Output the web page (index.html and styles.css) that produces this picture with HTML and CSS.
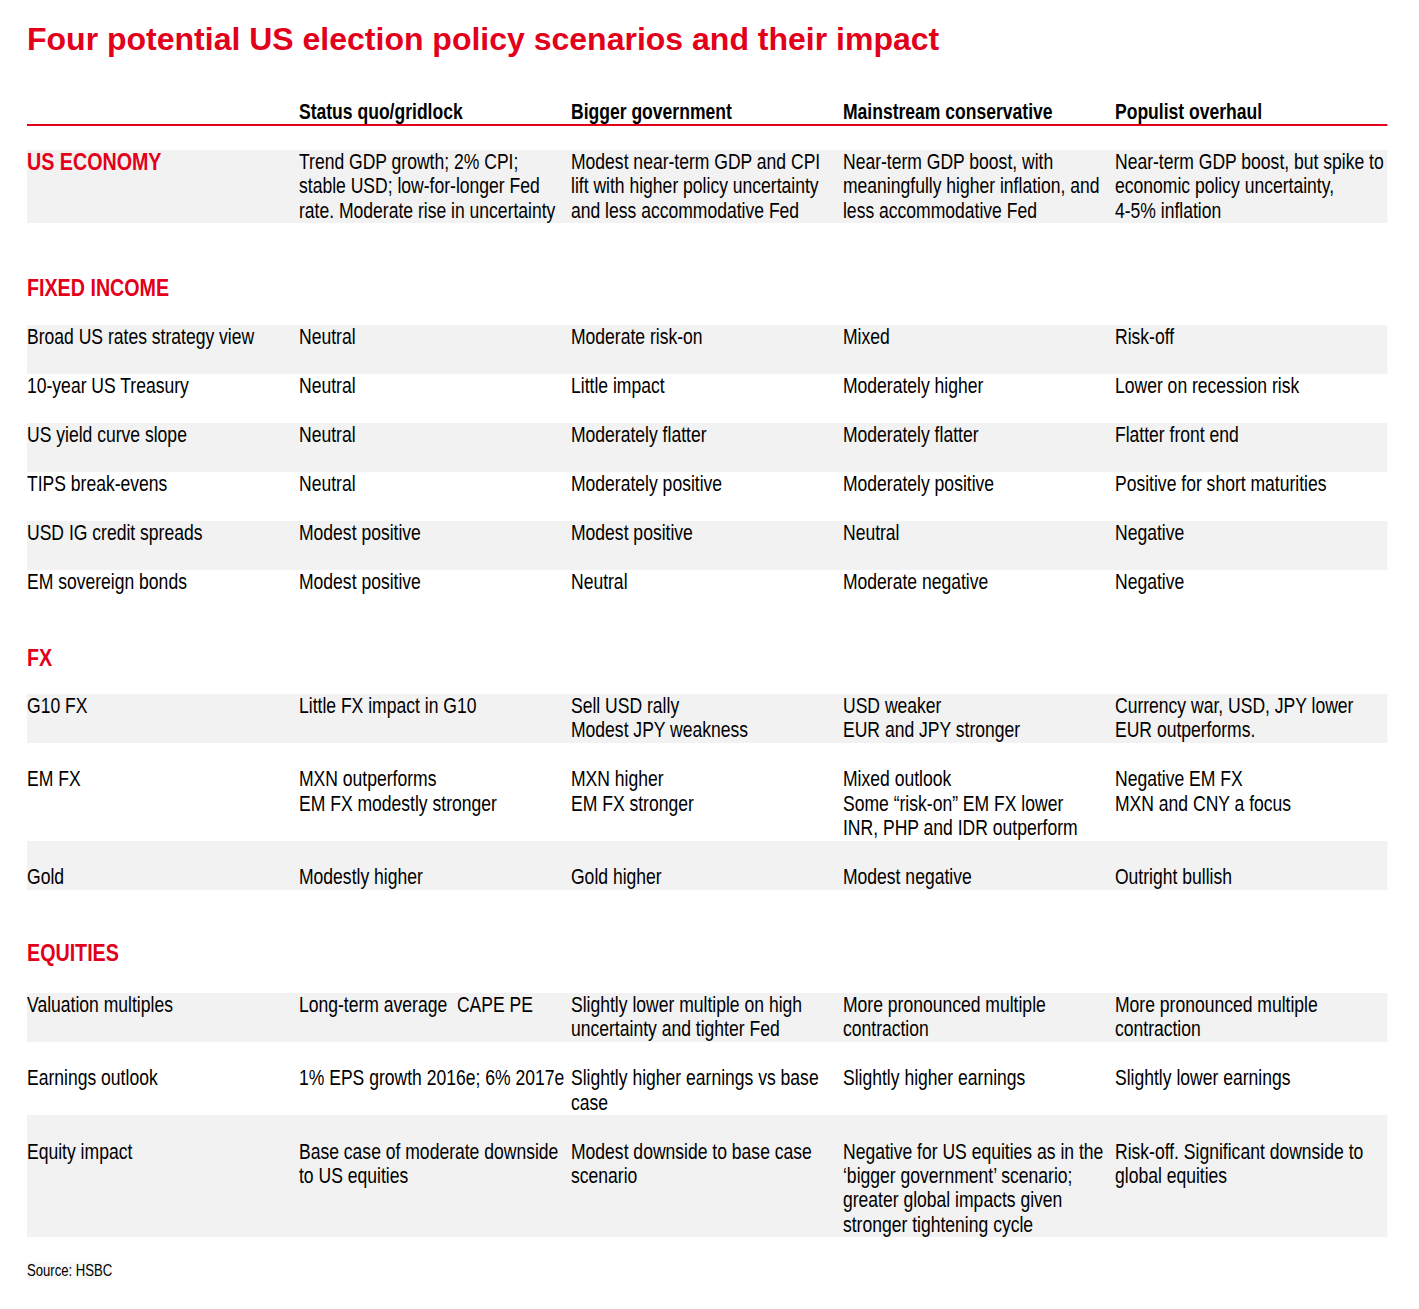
FILE: index.html
```html
<!DOCTYPE html>
<html>
<head>
<meta charset="utf-8">
<title>Four potential US election policy scenarios and their impact</title>
<link rel="stylesheet" href="styles.css">
</head>
<body>
<div class="page">
  <h1 class="title">Four potential US election policy scenarios and their impact</h1>

  <div class="table">
    <div class="grid head">
      <div></div>
      <div>Status quo/gridlock</div>
      <div>Bigger government</div>
      <div>Mainstream conservative</div>
      <div>Populist overhaul</div>
    </div>

    <div class="grid band econ">
      <div class="label-red">US ECONOMY</div>
      <div>Trend GDP growth; 2% CPI;<br>stable USD; low-for-longer Fed<br>rate. Moderate rise in uncertainty</div>
      <div>Modest near-term GDP and CPI<br>lift with higher policy uncertainty<br>and less accommodative Fed</div>
      <div>Near-term GDP boost, with<br>meaningfully higher inflation, and<br>less accommodative Fed</div>
      <div>Near-term GDP boost, but spike to<br>economic policy uncertainty,<br>4-5% inflation</div>
    </div>

    <div class="section sec-fi">FIXED INCOME</div>
    <div class="grid row band">
      <div>Broad US rates strategy view</div><div>Neutral</div><div>Moderate risk-on</div><div>Mixed</div><div>Risk-off</div>
    </div>
    <div class="grid row">
      <div>10-year US Treasury</div><div>Neutral</div><div>Little impact</div><div>Moderately higher</div><div>Lower on recession risk</div>
    </div>
    <div class="grid row band">
      <div>US yield curve slope</div><div>Neutral</div><div>Moderately flatter</div><div>Moderately flatter</div><div>Flatter front end</div>
    </div>
    <div class="grid row">
      <div>TIPS break-evens</div><div>Neutral</div><div>Moderately positive</div><div>Moderately positive</div><div>Positive for short maturities</div>
    </div>
    <div class="grid row band">
      <div>USD IG credit spreads</div><div>Modest positive</div><div>Modest positive</div><div>Neutral</div><div>Negative</div>
    </div>
    <div class="grid row">
      <div>EM sovereign bonds</div><div>Modest positive</div><div>Neutral</div><div>Moderate negative</div><div>Negative</div>
    </div>

    <div class="section sec-fx">FX</div>
    <div class="grid row band">
      <div>G10 FX</div><div>Little FX impact in G10</div><div>Sell USD rally<br>Modest JPY weakness</div><div>USD weaker<br>EUR and JPY stronger</div><div>Currency war, USD, JPY lower<br>EUR outperforms.</div>
    </div>
    <div class="grid row lead">
      <div>EM FX</div><div>MXN outperforms<br>EM FX modestly stronger</div><div>MXN higher<br>EM FX stronger</div><div>Mixed outlook<br>Some “risk-on” EM FX lower<br>INR, PHP and IDR outperform</div><div>Negative EM FX<br>MXN and CNY a focus</div>
    </div>
    <div class="grid row band lead">
      <div>Gold</div><div>Modestly higher</div><div>Gold higher</div><div>Modest negative</div><div>Outright bullish</div>
    </div>

    <div class="section sec-eq">EQUITIES</div>
    <div class="grid row band">
      <div>Valuation multiples</div><div>Long-term average&nbsp; CAPE PE</div><div>Slightly lower multiple on high<br>uncertainty and tighter Fed</div><div>More pronounced multiple<br>contraction</div><div>More pronounced multiple<br>contraction</div>
    </div>
    <div class="grid row lead">
      <div>Earnings outlook</div><div>1% EPS growth 2016e; 6% 2017e</div><div>Slightly higher earnings vs base<br>case</div><div>Slightly higher earnings</div><div>Slightly lower earnings</div>
    </div>
    <div class="grid row band lead">
      <div>Equity impact</div><div>Base case of moderate downside<br>to US equities</div><div>Modest downside to base case<br>scenario</div><div>Negative for US equities as in the<br>‘bigger government’ scenario;<br>greater global impacts given<br>stronger tightening cycle</div><div>Risk-off. Significant downside to<br>global equities</div>
    </div>

    <div class="source">Source: HSBC</div>
  </div>
</div>
</body>
</html>
```

FILE: styles.css
```css
html {
  overflow-x: hidden;
}

html, body {
  margin: 0;
  padding: 0;
  background: #ffffff;
}

.page {
  padding: 21px 0 40px 27px;
  font-family: "Liberation Sans", Arial, sans-serif;
  color: #000000;
}

.title {
  margin: 0;
  font-weight: bold;
  font-size: 32px;
  line-height: 36px;
  color: #e2001a;
}

/* Condensed (Arial Narrow-like) table: Liberation Sans squeezed horizontally */
.table {
  width: 1658.5px;
  transform: scaleX(0.82);
  transform-origin: left top;
  font-size: 21.4px;
  line-height: 24.4px;
}

.grid {
  display: grid;
  grid-template-columns: repeat(5, 1fr);
  box-sizing: border-box;
}

.grid > div {
  white-space: nowrap;
}

.head {
  margin-top: 43px;
  font-weight: bold;
  font-size: 21.4px;
  line-height: 24px;
  border-bottom: 2px solid #e2001a;
}

.band {
  background: #f2f2f2;
}

.econ {
  margin-top: 24px;
  min-height: 73.2px;
}

.label-red {
  color: #e2001a;
  font-weight: bold;
  font-size: 24px;
}

.section {
  color: #e2001a;
  font-weight: bold;
  font-size: 24px;
  line-height: 24.4px;
  margin-bottom: 24px;
}

.sec-fi {
  margin-top: 53px;
}

.sec-fx {
  margin-top: 27px;
}

.sec-eq {
  margin-top: 51px;
  margin-bottom: 28px;
}

.row {
  min-height: 49px;
}

.lead {
  padding-top: 24.4px;
}

.source {
  display: inline-block;
  margin-top: 25px;
  font-size: 16px;
  line-height: 17px;
  background: #f8f8f8;
}
```
